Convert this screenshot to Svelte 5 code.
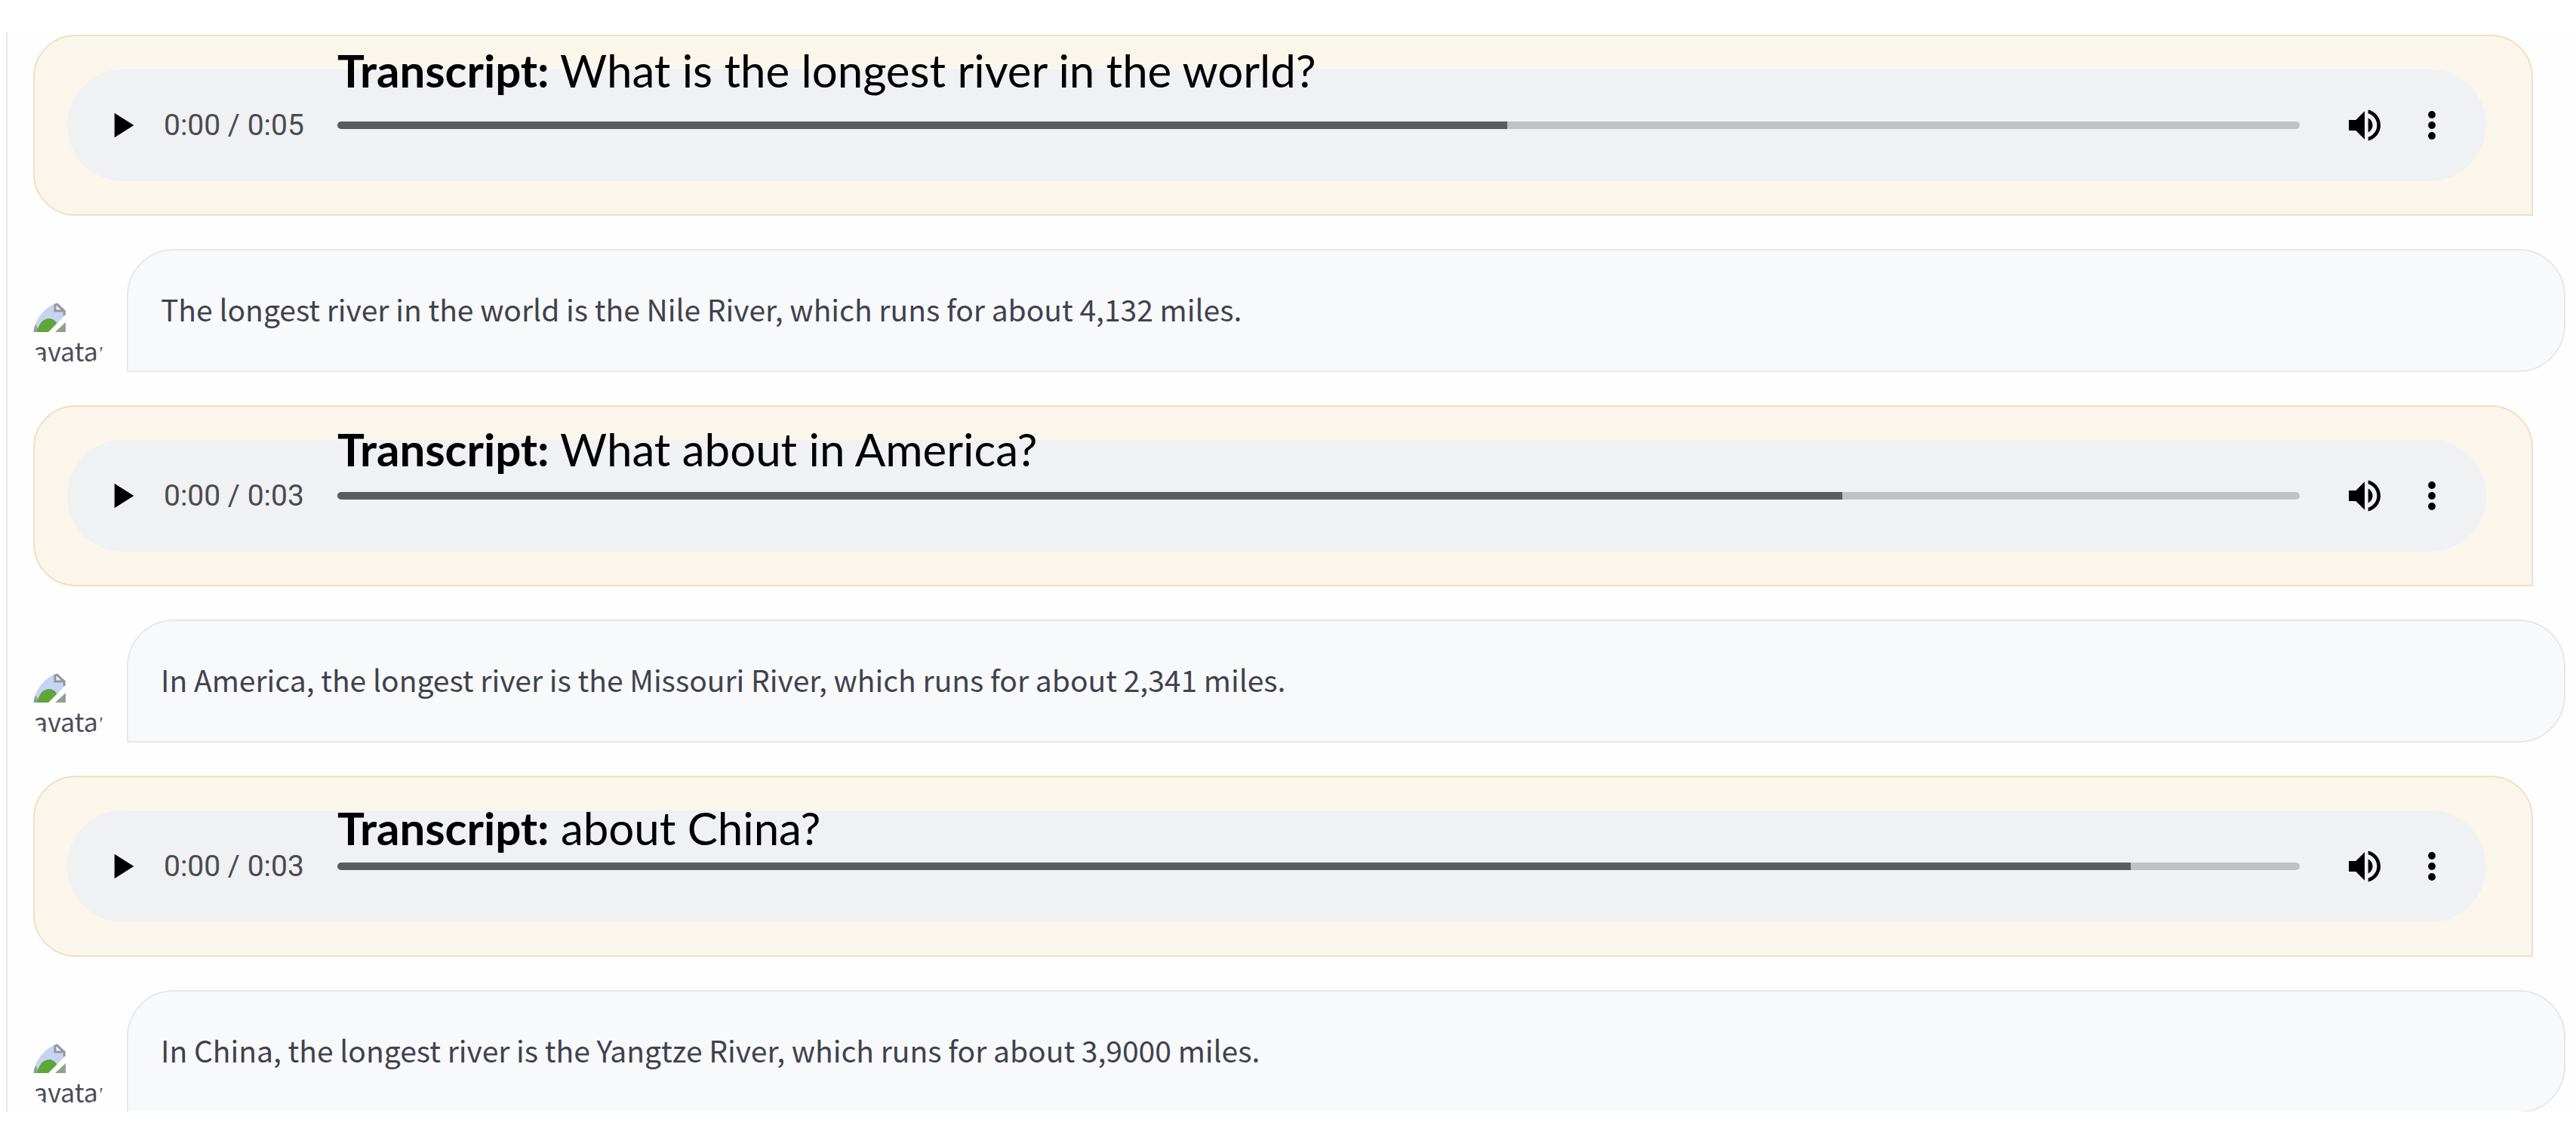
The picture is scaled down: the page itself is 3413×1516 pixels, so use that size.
<script>
  const exchanges = [
    {
      duration: '0:05',
      played: 59.6,
      transcript: 'What is the longest river in the world?',
      reply: 'The longest river in the world is the Nile River, which runs for about 4,132 miles.'
    },
    {
      duration: '0:03',
      played: 76.7,
      transcript: 'What about in America?',
      reply: 'In America, the longest river is the Missouri River, which runs for about 2,341 miles.'
    },
    {
      duration: '0:03',
      played: 91.4,
      transcript: 'about China?',
      reply: 'In China, the longest river is the Yangtze River, which runs for about 3,9000 miles.'
    }
  ];
</script>

<main class="panel">
  <div class="thread">
    {#each exchanges as item, i}
      <section class="user">
        <div class="player">
          <button type="button" aria-label="Play">
            <svg viewBox="0 0 24 24"><path d="M8 5v14l11-7z" /></svg>
          </button>
          <span class="time">0:00 / {item.duration}</span>
          <input
            type="range"
            min="0"
            max="100"
            step="0.1"
            value={item.played}
            style="--played: {item.played}%"
            aria-label="Position in recording {i + 1}"
          />
          <button type="button" aria-label="Mute">
            <svg viewBox="0 0 24 24">
              <path d="M3 9v6h4l5 5V4L7 9H3zm13.5 3c0-1.77-1.02-3.29-2.5-4.03v8.05c1.48-.73 2.5-2.25 2.5-4.02zM14 3.23v2.06c2.89.86 5 3.54 5 6.71s-2.11 5.85-5 6.71v2.06c4.01-.91 7-4.49 7-8.77s-2.99-7.86-7-8.77z" />
            </svg>
          </button>
          <button type="button" class="more" aria-label="More options">
            <svg viewBox="0 0 24 24">
              <circle cx="12" cy="6" r="2.1" /><circle cx="12" cy="12" r="2.1" /><circle cx="12" cy="18" r="2.1" />
            </svg>
          </button>
        </div>
      </section>

      <section class="bot">
        <div class="avatar">
          <svg viewBox="0 0 43 41" aria-hidden="true">
            <path d="M0 0H31L43 12V41H0z" fill="#c6d3f3" />
            <path d="M0 28Q5 32 8 41H0z" fill="#8fa18c" />
            <path d="M5 41Q9 23 22 23Q32 24 36 41z" fill="#5fa53a" />
            <path d="M43 26V41H29z" fill="#8fa18c" />
            <path d="M19 42L44 17V27L28 42z" fill="#fefefe" />
            <path d="M30 0H43V13z" fill="#fefefe" />
            <path d="M29 2V13H41V19M29 2L41 13" fill="#eef0f4" stroke="#95979c" stroke-width="3" />
          </svg>
          <span>avatar</span>
        </div>
        <p class="bubble">{item.reply}</p>
      </section>
    {/each}
  </div>

  <div class="transcripts">
    {#each exchanges as item}
      <p><strong>Transcript:</strong> {item.transcript}</p>
    {/each}
  </div>
</main>

<style>
  :global(body) {
    background: #fff;
  }

  .panel {
    position: relative;
    margin: 43px 0 42px 8px;
    padding: 3px 14px 0 34px;
    border-left: 2px solid #e6e6e8;
    background: #fefefe;
    overflow: hidden;
  }

  .thread {
    display: flex;
    flex-direction: column;
    gap: 44px;
  }

  .user {
    box-sizing: border-box;
    margin-right: 43px;
    padding: 44px 60px 44px 43px;
    border: 2px solid #f2dfbc;
    border-radius: 56px 56px 0 56px;
    background: #fbf6eb;
  }

  .player {
    display: flex;
    align-items: center;
    height: 148px;
    padding: 0 44px;
    box-sizing: border-box;
    border-radius: 74px;
    background: #eff1f3;
  }

  button {
    flex: none;
    width: 56px;
    height: 56px;
    padding: 0;
    border: 0;
    background: none;
    color: #000;
  }

  button svg {
    display: block;
    width: 56px;
    height: 56px;
    fill: currentColor;
  }

  .more {
    margin-left: 33px;
  }

  .time {
    flex: none;
    width: 230px;
    margin-left: 28px;
    font: 39px/48px Roboto, sans-serif;
    color: #4b4b4e;
  }

  input {
    flex: 1;
    min-width: 0;
    height: 10px;
    margin: 0 58px 0 0;
    border-radius: 5px;
    appearance: none;
    background: linear-gradient(to right, #5b5b5d var(--played), #c1c1c2 var(--played));
  }

  input::-webkit-slider-thumb {
    appearance: none;
    width: 0;
    height: 0;
  }

  .bot {
    display: flex;
    align-items: flex-end;
    gap: 30px;
  }

  .bot:last-child {
    margin-bottom: -2px;
  }

  .avatar {
    flex: none;
    width: 94px;
    height: 94px;
    border-radius: 50%;
    overflow: hidden;
    font: 34px/50px 'Noto Sans CJK SC', sans-serif;
    color: #4a4c58;
  }

  .avatar svg {
    display: block;
    width: 43px;
    height: 41px;
  }

  .avatar span {
    display: block;
  }

  .bubble {
    flex: 1;
    margin: 0;
    padding: 47px 43px 51px;
    border: 2px solid #e7e7eb;
    border-radius: 62px 62px 62px 0;
    background: #f8f9fb;
    font: 39px/61px 'Noto Sans CJK SC', sans-serif;
    color: #3f424e;
  }

  .transcripts {
    position: absolute;
    top: 14px;
    left: 437px;
    display: flex;
    flex-direction: column;
    gap: 430px;
    pointer-events: none;
  }

  .transcripts p {
    margin: 0;
    font: 60px/72px Lato, sans-serif;
    color: #000;
    white-space: nowrap;
  }
</style>
